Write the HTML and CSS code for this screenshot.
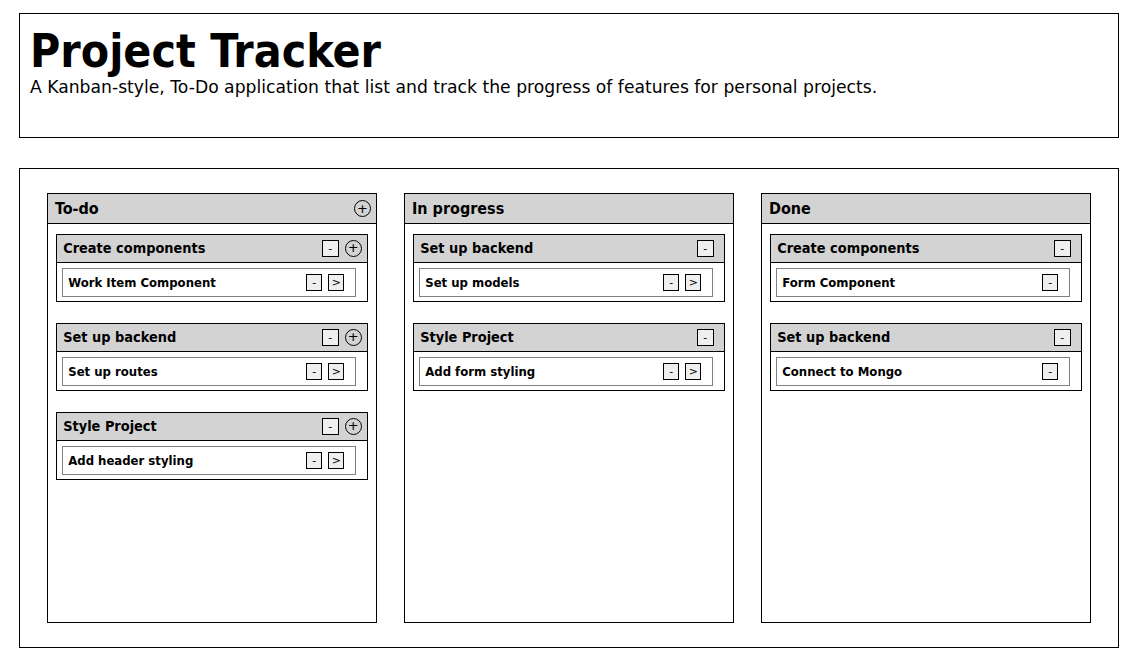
FILE: index.html
```html
<!DOCTYPE html>
<html lang="en">
<head>
<meta charset="utf-8">
<title>Project Tracker</title>
<link rel="stylesheet" href="styles.css">
</head>
<body>
<header class="header">
  <h1 class="title">Project Tracker</h1>
  <p class="subtitle">A Kanban-style, To-Do application that list and track the progress of features for personal projects.</p>
</header>
<main class="board">
  <section class="column">
    <div class="column-head">
      <h2 class="column-title">To-do</h2>
      <button class="btn-circle">+</button>
    </div>
    <div class="column-body">
      <div class="feature">
        <div class="feature-head">
          <h3 class="feature-title">Create components</h3>
          <div class="actions"><button class="btn-sq">-</button><button class="btn-circle">+</button></div>
        </div>
        <div class="task"><span class="task-name">Work Item Component</span><div class="actions"><button class="btn-sq">-</button><button class="btn-sq">&gt;</button></div></div>
      </div>
      <div class="feature">
        <div class="feature-head">
          <h3 class="feature-title">Set up backend</h3>
          <div class="actions"><button class="btn-sq">-</button><button class="btn-circle">+</button></div>
        </div>
        <div class="task"><span class="task-name">Set up routes</span><div class="actions"><button class="btn-sq">-</button><button class="btn-sq">&gt;</button></div></div>
      </div>
      <div class="feature">
        <div class="feature-head">
          <h3 class="feature-title">Style Project</h3>
          <div class="actions"><button class="btn-sq">-</button><button class="btn-circle">+</button></div>
        </div>
        <div class="task"><span class="task-name">Add header styling</span><div class="actions"><button class="btn-sq">-</button><button class="btn-sq">&gt;</button></div></div>
      </div>
    </div>
  </section>
  <section class="column">
    <div class="column-head">
      <h2 class="column-title">In progress</h2>
    </div>
    <div class="column-body">
      <div class="feature">
        <div class="feature-head wide">
          <h3 class="feature-title">Set up backend</h3>
          <div class="actions"><button class="btn-sq">-</button></div>
        </div>
        <div class="task"><span class="task-name">Set up models</span><div class="actions"><button class="btn-sq">-</button><button class="btn-sq">&gt;</button></div></div>
      </div>
      <div class="feature">
        <div class="feature-head wide">
          <h3 class="feature-title">Style Project</h3>
          <div class="actions"><button class="btn-sq">-</button></div>
        </div>
        <div class="task"><span class="task-name">Add form styling</span><div class="actions"><button class="btn-sq">-</button><button class="btn-sq">&gt;</button></div></div>
      </div>
    </div>
  </section>
  <section class="column">
    <div class="column-head">
      <h2 class="column-title">Done</h2>
    </div>
    <div class="column-body">
      <div class="feature">
        <div class="feature-head wide">
          <h3 class="feature-title">Create components</h3>
          <div class="actions"><button class="btn-sq">-</button></div>
        </div>
        <div class="task"><span class="task-name">Form Component</span><div class="actions"><button class="btn-sq">-</button></div></div>
      </div>
      <div class="feature">
        <div class="feature-head wide">
          <h3 class="feature-title">Set up backend</h3>
          <div class="actions"><button class="btn-sq">-</button></div>
        </div>
        <div class="task"><span class="task-name">Connect to Mongo</span><div class="actions"><button class="btn-sq">-</button></div></div>
      </div>
    </div>
  </section>
</main>
</body>
</html>
```
FILE: styles.css
```css
* { box-sizing: border-box; }

body {
  margin: 13px 0 0 19px;
  font-family: "DejaVu Sans", sans-serif;
  color: #000;
  background: #fff;
}

.header {
  width: 1100px;
  height: 125px;
  border: 1px solid #000;
  padding: 11px 10px;
}

.title {
  margin: 0;
  font-family: "DejaVu Sans Condensed", "DejaVu Sans", sans-serif;
  font-weight: bold;
  font-size: 46px;
  line-height: 52px;
}

.subtitle {
  margin: 0;
  font-family: "DejaVu Sans", sans-serif;
  font-size: 17.2px;
  line-height: 20px;
}

.board {
  width: 1100px;
  height: 480px;
  margin-top: 30px;
  border: 1px solid #000;
  padding: 24px 27px;
  display: flex;
  gap: 27px;
}

.column {
  width: 330px;
  height: 430px;
  border: 1px solid #000;
}

.column-head {
  height: 30px;
  background: #d3d3d3;
  border-bottom: 1px solid #000;
  display: flex;
  align-items: center;
  justify-content: space-between;
  padding: 0 5px 0 7px;
}

.column-title {
  margin: 0;
  font-family: "DejaVu Sans Condensed", "DejaVu Sans", sans-serif;
  font-size: 16px;
  font-weight: bold;
}

.column-body {
  display: flex;
  flex-direction: column;
  align-items: center;
  gap: 21px;
  padding-top: 10px;
}

.feature {
  width: 95%;
  border: 1px solid #000;
  padding-bottom: 4px;
}

.feature-head {
  height: 28px;
  background: #d3d3d3;
  border-bottom: 1px solid #000;
  display: flex;
  align-items: center;
  justify-content: space-between;
  padding: 0 5px 1px 6px;
}

.feature-head.wide { padding-right: 10px; }

.feature-title {
  margin: 0;
  font-family: "DejaVu Sans Condensed", "DejaVu Sans", sans-serif;
  font-size: 14.4px;
  font-weight: bold;
}

.actions {
  display: flex;
  align-items: center;
  gap: 6px;
}

.btn-sq {
  width: 17px;
  height: 17px;
  padding: 0;
  border: 1px solid #000;
  background: #efefef;
  font-family: "DejaVu Sans", sans-serif;
  font-size: 11px;
  line-height: 15px;
  color: #000;
}

.task .btn-sq { width: 16px; height: 17px; }

.btn-circle {
  width: 17px;
  height: 17px;
  padding: 0;
  border: 1px solid #000;
  border-radius: 50%;
  background: transparent;
  font-family: "DejaVu Sans", sans-serif;
  font-size: 13px;
  line-height: 14px;
  color: #000;
}

.task {
  width: 95%;
  height: 29px;
  margin: 5px 0 0 5px;
  border: 1px solid #808080;
  display: flex;
  align-items: center;
  justify-content: space-between;
  padding: 0 11px 1px 5px;
}

.task-name {
  font-family: "DejaVu Sans Condensed", "DejaVu Sans", sans-serif;
  font-size: 13px;
  font-weight: bold;
}
```
